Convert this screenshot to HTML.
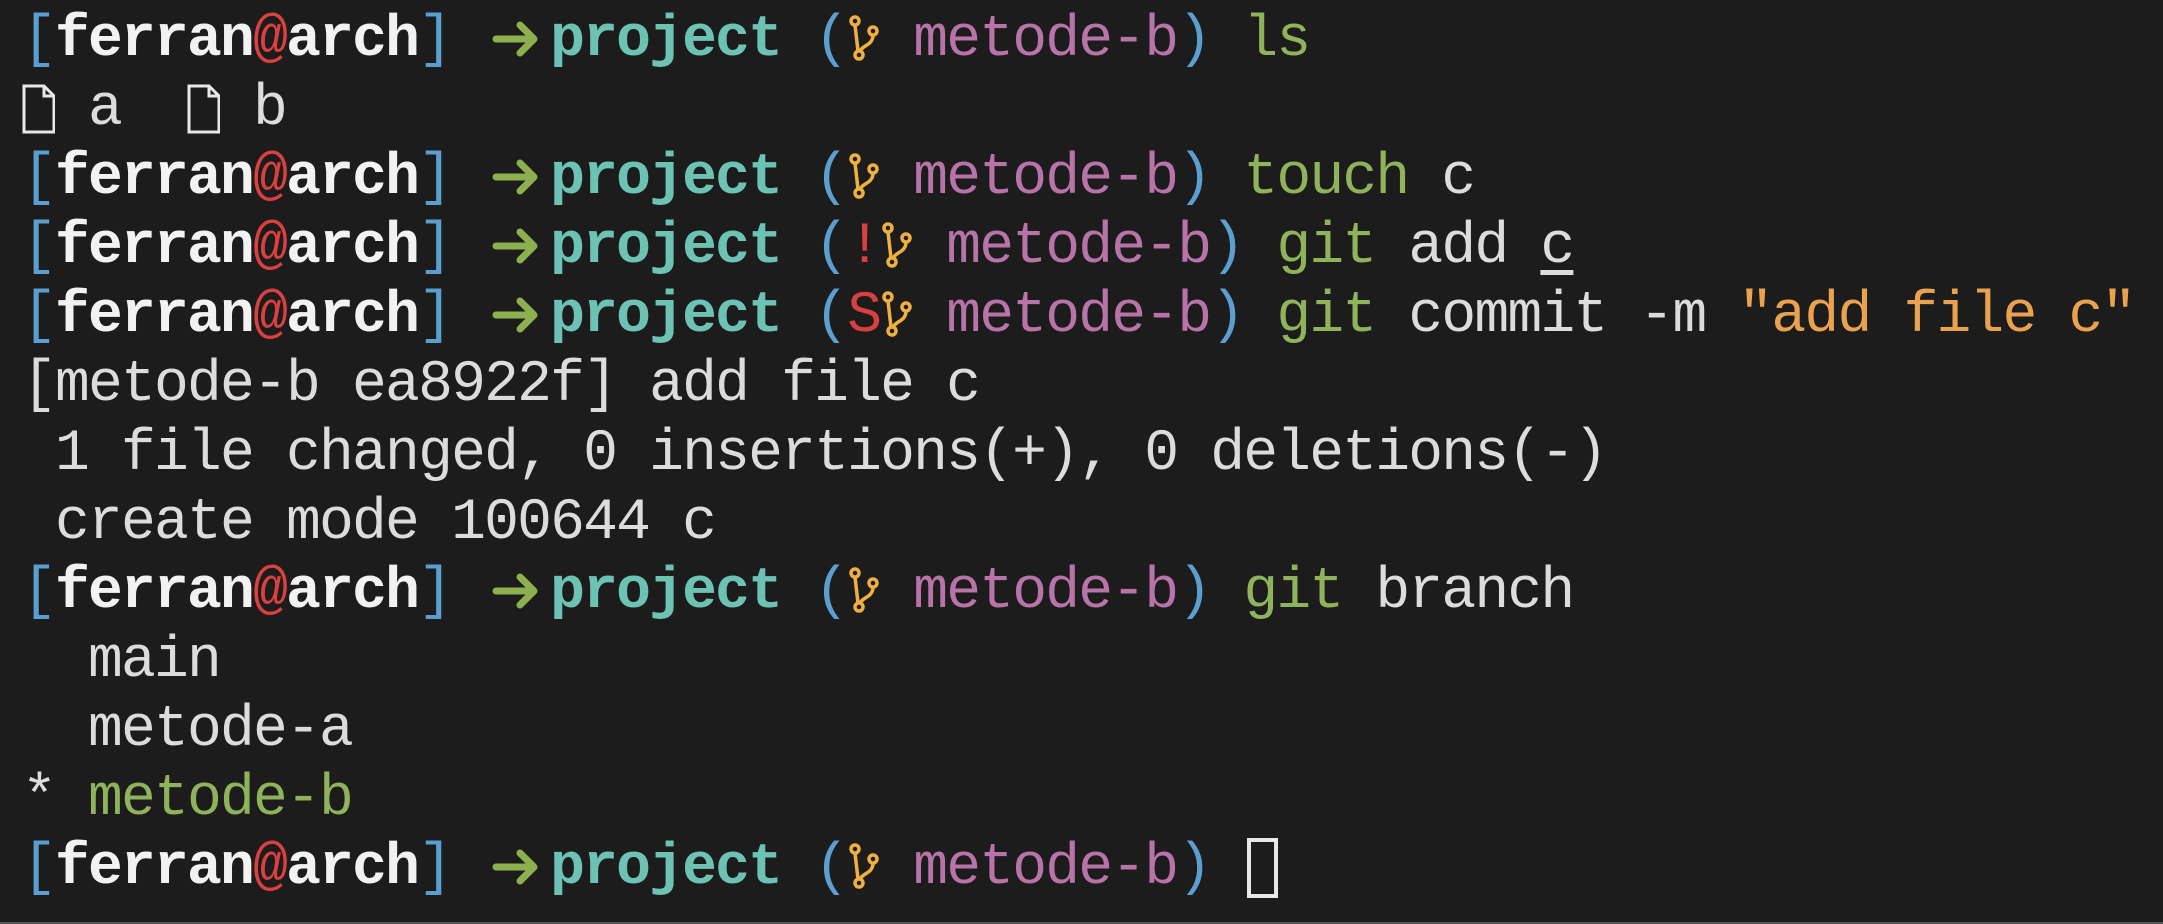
<!DOCTYPE html>
<html><head><meta charset="utf-8"><style>
html,body{margin:0;padding:0;background:#1c1c1c;}
body{width:2163px;height:924px;overflow:hidden;position:relative;}
pre{margin:0;padding:6px 0 0 22px;font-family:"Liberation Mono","DejaVu Sans Mono",monospace;font-size:58px;letter-spacing:-1.8px;line-height:69px;color:#dcdcdc;white-space:pre;}
.b{color:#5a9fd0}.w{color:#f2f2f2;font-weight:bold}.r{color:#d9403f}
.t{color:#6cc3b3;font-weight:bold}.p{color:#b874a8}.gc{color:#8fb35a}.o{color:#eaa24f}
.icon{display:inline-block;width:33px;height:58px;vertical-align:-12px}
.arr{display:inline-block;width:66px;height:58px;vertical-align:-12px}
.cur{display:inline-block;width:31px;height:60px;border:4px solid #e8e8e8;box-sizing:border-box;vertical-align:-15px;margin-left:4px}
.u{text-decoration:underline;text-underline-offset:8px}
.bot{position:absolute;left:0;bottom:0;width:100%;height:2px;background:#555}
</style></head><body>
<pre><span class="b">[</span><span class="w">ferran</span><span class="r">@</span><span class="w">arch</span><span class="b">]</span> <svg class="arr" viewBox="0 0 66 58"><path d="M12 30 H48 M36 16 L50 30 L36 44" fill="none" stroke="#8db04e" stroke-width="7" stroke-linecap="round" stroke-linejoin="round"/></svg><span class="t">project</span> <span class="b">(</span><svg class="icon" viewBox="0 0 33 58"><g fill="none" stroke="#f0b040" stroke-width="3.5"><circle cx="8" cy="12" r="4"/><circle cx="26" cy="22" r="4"/><circle cx="12" cy="46" r="4"/><path d="M8 16 L11 42 M26 26 C26 36 16 36 13 42"/></g></svg> <span class="p">metode-b</span><span class="b">)</span> <span class="gc">ls</span>
<svg class="icon" viewBox="0 0 33 58"><path d="M2 8 H22 L32 18 V54 H2 Z M22 8 V18 H32" fill="none" stroke="#e8e8e8" stroke-width="3"/></svg> a  <svg class="icon" viewBox="0 0 33 58"><path d="M2 8 H22 L32 18 V54 H2 Z M22 8 V18 H32" fill="none" stroke="#e8e8e8" stroke-width="3"/></svg> b
<span class="b">[</span><span class="w">ferran</span><span class="r">@</span><span class="w">arch</span><span class="b">]</span> <svg class="arr" viewBox="0 0 66 58"><path d="M12 30 H48 M36 16 L50 30 L36 44" fill="none" stroke="#8db04e" stroke-width="7" stroke-linecap="round" stroke-linejoin="round"/></svg><span class="t">project</span> <span class="b">(</span><svg class="icon" viewBox="0 0 33 58"><g fill="none" stroke="#f0b040" stroke-width="3.5"><circle cx="8" cy="12" r="4"/><circle cx="26" cy="22" r="4"/><circle cx="12" cy="46" r="4"/><path d="M8 16 L11 42 M26 26 C26 36 16 36 13 42"/></g></svg> <span class="p">metode-b</span><span class="b">)</span> <span class="gc">touch</span> c
<span class="b">[</span><span class="w">ferran</span><span class="r">@</span><span class="w">arch</span><span class="b">]</span> <svg class="arr" viewBox="0 0 66 58"><path d="M12 30 H48 M36 16 L50 30 L36 44" fill="none" stroke="#8db04e" stroke-width="7" stroke-linecap="round" stroke-linejoin="round"/></svg><span class="t">project</span> <span class="b">(</span><span class="r">!</span><svg class="icon" viewBox="0 0 33 58"><g fill="none" stroke="#f0b040" stroke-width="3.5"><circle cx="8" cy="12" r="4"/><circle cx="26" cy="22" r="4"/><circle cx="12" cy="46" r="4"/><path d="M8 16 L11 42 M26 26 C26 36 16 36 13 42"/></g></svg> <span class="p">metode-b</span><span class="b">)</span> <span class="gc">git</span> add <span class="u">c</span>
<span class="b">[</span><span class="w">ferran</span><span class="r">@</span><span class="w">arch</span><span class="b">]</span> <svg class="arr" viewBox="0 0 66 58"><path d="M12 30 H48 M36 16 L50 30 L36 44" fill="none" stroke="#8db04e" stroke-width="7" stroke-linecap="round" stroke-linejoin="round"/></svg><span class="t">project</span> <span class="b">(</span><span class="r">S</span><svg class="icon" viewBox="0 0 33 58"><g fill="none" stroke="#f0b040" stroke-width="3.5"><circle cx="8" cy="12" r="4"/><circle cx="26" cy="22" r="4"/><circle cx="12" cy="46" r="4"/><path d="M8 16 L11 42 M26 26 C26 36 16 36 13 42"/></g></svg> <span class="p">metode-b</span><span class="b">)</span> <span class="gc">git</span> commit -m <span class="o">"add file c"</span>
[metode-b ea8922f] add file c
 1 file changed, 0 insertions(+), 0 deletions(-)
 create mode 100644 c
<span class="b">[</span><span class="w">ferran</span><span class="r">@</span><span class="w">arch</span><span class="b">]</span> <svg class="arr" viewBox="0 0 66 58"><path d="M12 30 H48 M36 16 L50 30 L36 44" fill="none" stroke="#8db04e" stroke-width="7" stroke-linecap="round" stroke-linejoin="round"/></svg><span class="t">project</span> <span class="b">(</span><svg class="icon" viewBox="0 0 33 58"><g fill="none" stroke="#f0b040" stroke-width="3.5"><circle cx="8" cy="12" r="4"/><circle cx="26" cy="22" r="4"/><circle cx="12" cy="46" r="4"/><path d="M8 16 L11 42 M26 26 C26 36 16 36 13 42"/></g></svg> <span class="p">metode-b</span><span class="b">)</span> <span class="gc">git</span> branch
  main
  metode-a
* <span class="gc">metode-b</span>
<span class="b">[</span><span class="w">ferran</span><span class="r">@</span><span class="w">arch</span><span class="b">]</span> <svg class="arr" viewBox="0 0 66 58"><path d="M12 30 H48 M36 16 L50 30 L36 44" fill="none" stroke="#8db04e" stroke-width="7" stroke-linecap="round" stroke-linejoin="round"/></svg><span class="t">project</span> <span class="b">(</span><svg class="icon" viewBox="0 0 33 58"><g fill="none" stroke="#f0b040" stroke-width="3.5"><circle cx="8" cy="12" r="4"/><circle cx="26" cy="22" r="4"/><circle cx="12" cy="46" r="4"/><path d="M8 16 L11 42 M26 26 C26 36 16 36 13 42"/></g></svg> <span class="p">metode-b</span><span class="b">)</span> <span class="cur"></span></pre>
<div class="bot"></div>
</body></html>
